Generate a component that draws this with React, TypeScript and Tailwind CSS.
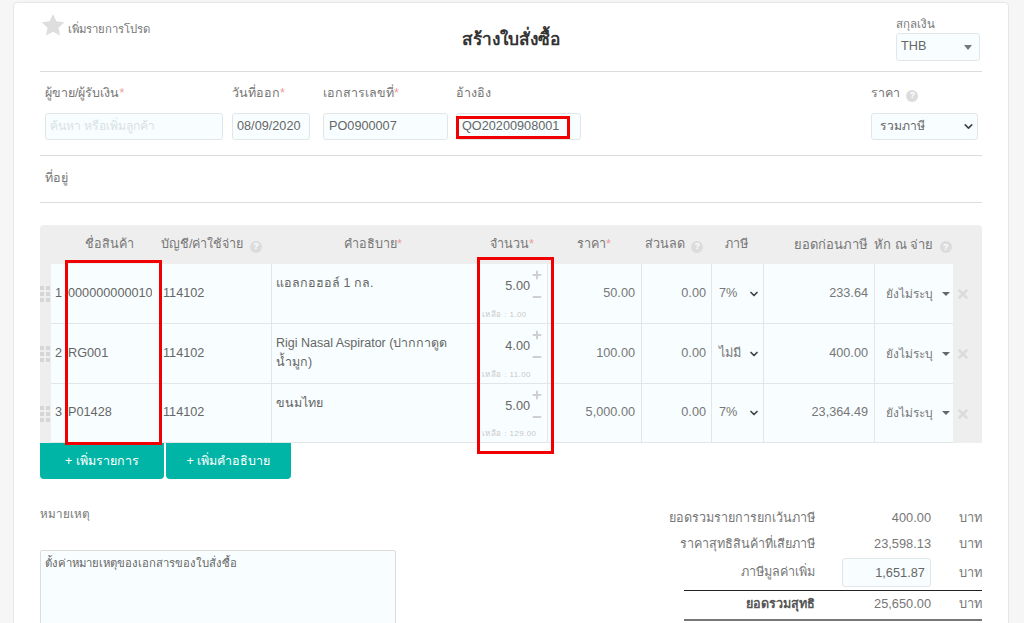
import { ChevronDown, Minus, Plus, X } from "lucide-react";

const font = "[font-family:'Liberation_Sans','Noto_Sans',sans-serif]";
const rowGrid =
  "grid grid-cols-[11px_15px_95px_110px_206px_70px_94px_70px_52px_111px_79px_29px]";

const rows = [
  { no: 1, code: "000000000010000", desc: "แอลกอฮอล์ 1 กล.", qty: "5.00", left: "เหลือ : 1.00", price: "50.00", tax: "7%", total: "233.64", h: "h-[60px]" },
  { no: 2, code: "RG001", desc: "Rigi Nasal Aspirator (ปากกาดูดน้ำมูก)", qty: "4.00", left: "เหลือ : 11.00", price: "100.00", tax: "ไม่มี", total: "400.00", h: "h-[60px]" },
  { no: 3, code: "P01428", desc: "ขนมไทย", qty: "5.00", left: "เหลือ : 129.00", price: "5,000.00", tax: "7%", total: "23,364.49", h: "h-[59px]" },
];

const Help = () => (
  <span className="inline-flex items-center justify-center w-[12px] h-[12px] ml-[3px] rounded-full bg-[#dcdcdc] text-white text-[9px] leading-none font-bold align-[-1px]">?</span>
);
const Req = () => <span className="text-[#ef9a9a]">*</span>;

const Caret = () => (
  <span className="w-0 h-0 border-x-[4px] border-x-transparent border-t-[4px] border-t-[#666]" />
);

const Grip = () => (
  <div className="grid grid-cols-2 gap-[2px] w-[10px]">
    {[0, 1, 2, 3, 4, 5].map((i) => (
      <span key={i} className="w-[4px] h-[4px] bg-[#d6d6d6]" />
    ))}
  </div>
);

const Field = ({ className, children }: { className: string; children?: React.ReactNode }) => (
  <div className={`h-[27px] bg-[#f8feff] border border-[#e2e6e6] rounded-[3px] flex items-center text-[12.7px] text-[#666] ${className}`}>
    {children}
  </div>
);

const SumRow = ({ label, value, bold }: { label: string; value: string; bold?: boolean }) => (
  <div className="grid grid-cols-[131px_116px_51px] items-center h-[26px] text-[12.8px] text-[#777]">
    <span className={`text-right whitespace-nowrap justify-self-end text-[12.6px] ${bold ? "font-bold text-[#555]" : ""}`}>{label}</span>
    <span className="text-right">{value}</span>
    <span className="text-right">บาท</span>
  </div>
);

export default function App() {
  return (
    <div className={`relative h-[623px] overflow-hidden bg-[#f6f6f6] pt-[2px] pl-[13px] ${font}`}>
      <div className="w-[996px] h-[640px] bg-white border border-[#e6e6e6] rounded-[4px] px-[26px]">
        {/* top */}
        <div className="h-[69px] border-b border-[#dcdcdc] grid grid-cols-[1fr_auto_1fr]">
          <div className="flex items-start pt-[10px] pl-[1px] text-[11.3px] text-[#777]">
            <svg width="24" height="24" viewBox="0 0 24 24" className="fill-[#dedede]">
              <path d="M12 1l3.4 7.3 7.9 1-5.8 5.4 1.5 7.9-7-3.9-7 3.9 1.5-7.9L.7 9.3l7.9-1z" />
            </svg>
            <span className="ml-[3px] mt-[8px]">เพิ่มรายการโปรด</span>
          </div>
          <h1 className="pt-[24px] text-[17.3px] font-bold text-[#333] whitespace-nowrap">สร้างใบสั่งซื้อ</h1>
          <div className="w-[86px] pt-[12px] justify-self-end">
            <div className="text-[11.5px] leading-[18px] text-[#777]">สกุลเงิน</div>
            <Field className="w-[84px] !h-[28px] px-[4px] justify-between pr-[7px]">
              <span>THB</span>
              <span className="w-0 h-0 border-x-[4px] border-x-transparent border-t-[5px] border-t-[#777]" />
            </Field>
          </div>
        </div>

        {/* form fields */}
        <div className="h-[84px] border-b border-[#dcdcdc] flex pl-[5px] pt-[12px] text-[12.5px] text-[#777]">
          <div className="w-[187px]">
            <div className="h-[29px]">ผู้ขาย/ผู้รับเงิน<Req /></div>
            <Field className="w-[178px] px-[4px] !text-[#d8e2e2] !text-[12.2px]">ค้นหา หรือเพิ่มลูกค้า</Field>
          </div>
          <div className="w-[91px]">
            <div className="h-[29px]">วันที่ออก<Req /></div>
            <Field className="w-[78px] px-[4px]">08/09/2020</Field>
          </div>
          <div className="w-[133px]">
            <div className="h-[29px]">เอกสารเลขที่<Req /></div>
            <Field className="w-[125px] px-[5px]">PO0900007</Field>
          </div>
          <div className="w-[415px]">
            <div className="h-[29px]">อ้างอิง</div>
            <Field className="w-[125px] px-[5px]">QO20200908001</Field>
          </div>
          <div>
            <div className="h-[29px]">ราคา <Help /></div>
            <Field className="w-[107px] pl-[8px] pr-[2px] justify-between !text-[12.2px]">
              <span>รวมภาษี</span>
              <ChevronDown size={13} strokeWidth={3} className="text-[#444]" />
            </Field>
          </div>
        </div>

        {/* address */}
        <div className="h-[47px] border-b border-[#dcdcdc] pl-[5px] pt-[13px] text-[12.5px] text-[#777]">ที่อยู่</div>

        {/* items table */}
        <div className="mt-[22px] w-[942px] bg-[#eeeeee] rounded-t-[4px] text-[12.7px] text-[#777]">
          <div className={`${rowGrid} h-[39px] items-center text-center whitespace-nowrap text-[12.6px]`}>
            <span />
            <span />
            <span className="pr-[8px]">ชื่อสินค้า</span>
            <span className="text-left">บัญชี/ค่าใช้จ่าย <Help /></span>
            <span className="pr-[2px]">คำอธิบาย<Req /></span>
            <span>จำนวน<Req /></span>
            <span>ราคา<Req /></span>
            <span className="pr-[4px]">ส่วนลด <Help /></span>
            <span className="pr-[2px]">ภาษี</span>
            <span className="text-right pr-[6px] text-[13px]">ยอดก่อนภาษี</span>
            <span className="col-span-2 text-left text-[13px]">หัก ณ จ่าย <Help /></span>
          </div>
          {rows.map((r) => (
            <div key={r.no} className={`${rowGrid} ${r.h} items-stretch`}>
              <div className="flex items-center"><Grip /></div>
              <div className="col-span-3 bg-[#f8feff] border-b border-[#e2e6e6] grid grid-cols-[15px_95px_110px] items-center text-[#666]">
                <span className="text-center">{r.no}</span>
                <span className="w-[86px] overflow-hidden whitespace-nowrap pl-[2px]">{r.code}</span>
                <span className="pl-[2px]">114102</span>
              </div>
              <div className="bg-[#f8feff] border-l border-b border-[#e2e6e6] px-[4px] pt-[10px] leading-[19px] text-[12.5px] text-[#666]">{r.desc}</div>
              <div className="relative bg-[#f8feff] border-l border-b border-[#e2e6e6]">
                <span className="absolute right-[17px] top-[13px] text-[#666]">{r.qty}</span>
                <Plus size={12} strokeWidth={4} className="absolute right-[4px] top-[5px] text-[#cfcfcf]" />
                <Minus size={12} strokeWidth={4} className="absolute right-[4px] top-[27px] text-[#cfcfcf]" />
                <span className="absolute left-[4px] bottom-[2px] text-[8px] tracking-[0.4px] text-[#c8c8c8] whitespace-nowrap">{r.left}</span>
              </div>
              <div className="bg-[#f8feff] border-l border-b border-[#e2e6e6] flex items-center justify-end pr-[6px]">{r.price}</div>
              <div className="bg-[#f8feff] border-l border-b border-[#e2e6e6] flex items-center justify-end pr-[5px]">0.00</div>
              <div className="bg-[#f8feff] border-l border-b border-[#e2e6e6] flex items-center justify-between pl-[7px] pr-[3px]">
                <span>{r.tax}</span>
                <ChevronDown size={12} strokeWidth={3.5} className="text-[#444]" />
              </div>
              <div className="bg-[#f8feff] border-l border-b border-[#e2e6e6] flex items-center justify-end pr-[6px]">{r.total}</div>
              <div className="bg-[#f8feff] border-l border-b border-[#e2e6e6] flex items-center justify-between pl-[11px] pr-[3px] whitespace-nowrap text-[12px]">
                <span>ยังไม่ระบุ</span>
                <Caret />
              </div>
              <div className="flex items-center pl-[3px]">
                <X size={14} strokeWidth={4.5} className="text-[#dcdcdc]" />
              </div>
            </div>
          ))}
        </div>

        {/* add buttons */}
        <div className="flex gap-[2px] text-[12.5px] text-white">
          <button className="w-[124px] h-[36px] bg-[#00b5a5] rounded-b-[4px]">+ เพิ่มรายการ</button>
          <button className="w-[125px] h-[36px] bg-[#00b5a5] rounded-b-[4px]">+ เพิ่มคำอธิบาย</button>
        </div>

        {/* note and summary */}
        <div className="flex justify-between">
          <div className="pt-[26px] text-[11.3px] text-[#777]">
            <div className="h-[45px] text-[11.7px]">หมายเหตุ</div>
            <div className="w-[356px] h-[90px] bg-[#f8feff] border border-[#dcdcdc] rounded-[2px] px-[4px] pt-[4px] text-[#666]">
              ตั้งค่าหมายเหตุของเอกสารของใบสั่งซื้อ
            </div>
          </div>
          <div className="w-[298px] pt-[26px]">
            <SumRow label="ยอดรวมรายการยกเว้นภาษี" value="400.00" />
            <SumRow label="ราคาสุทธิสินค้าที่เสียภาษี" value="23,598.13" />
            <div className="grid grid-cols-[131px_116px_51px] items-center h-[31px] text-[12.8px] text-[#777]">
              <span className="text-right text-[12.6px]">ภาษีมูลค่าเพิ่ม</span>
              <div className="justify-self-end w-[89px] h-[29px] bg-[#f8feff] border border-[#e2e6e6] rounded-[3px] flex items-center justify-end pr-[5px] text-[#666]">1,651.87</div>
              <span className="text-right">บาท</span>
            </div>
            <div className="mt-[2px] border-t border-[#222] border-b-2 border-b-[#777] h-[31px] -mb-px">
              <SumRow label="ยอดรวมสุทธิ" value="25,650.00" bold />
            </div>
          </div>
        </div>
      </div>

      {/* red annotation boxes */}
      <div className="absolute left-[456px] top-[116px] w-[114px] h-[23px] border-[3px] border-[#f00000]" />
      <div className="absolute left-[65px] top-[260px] w-[97px] h-[185px] border-[3px] border-[#f00000]" />
      <div className="absolute left-[477px] top-[257px] w-[77px] h-[197px] border-[3px] border-[#f00000]" />
    </div>
  );
}
